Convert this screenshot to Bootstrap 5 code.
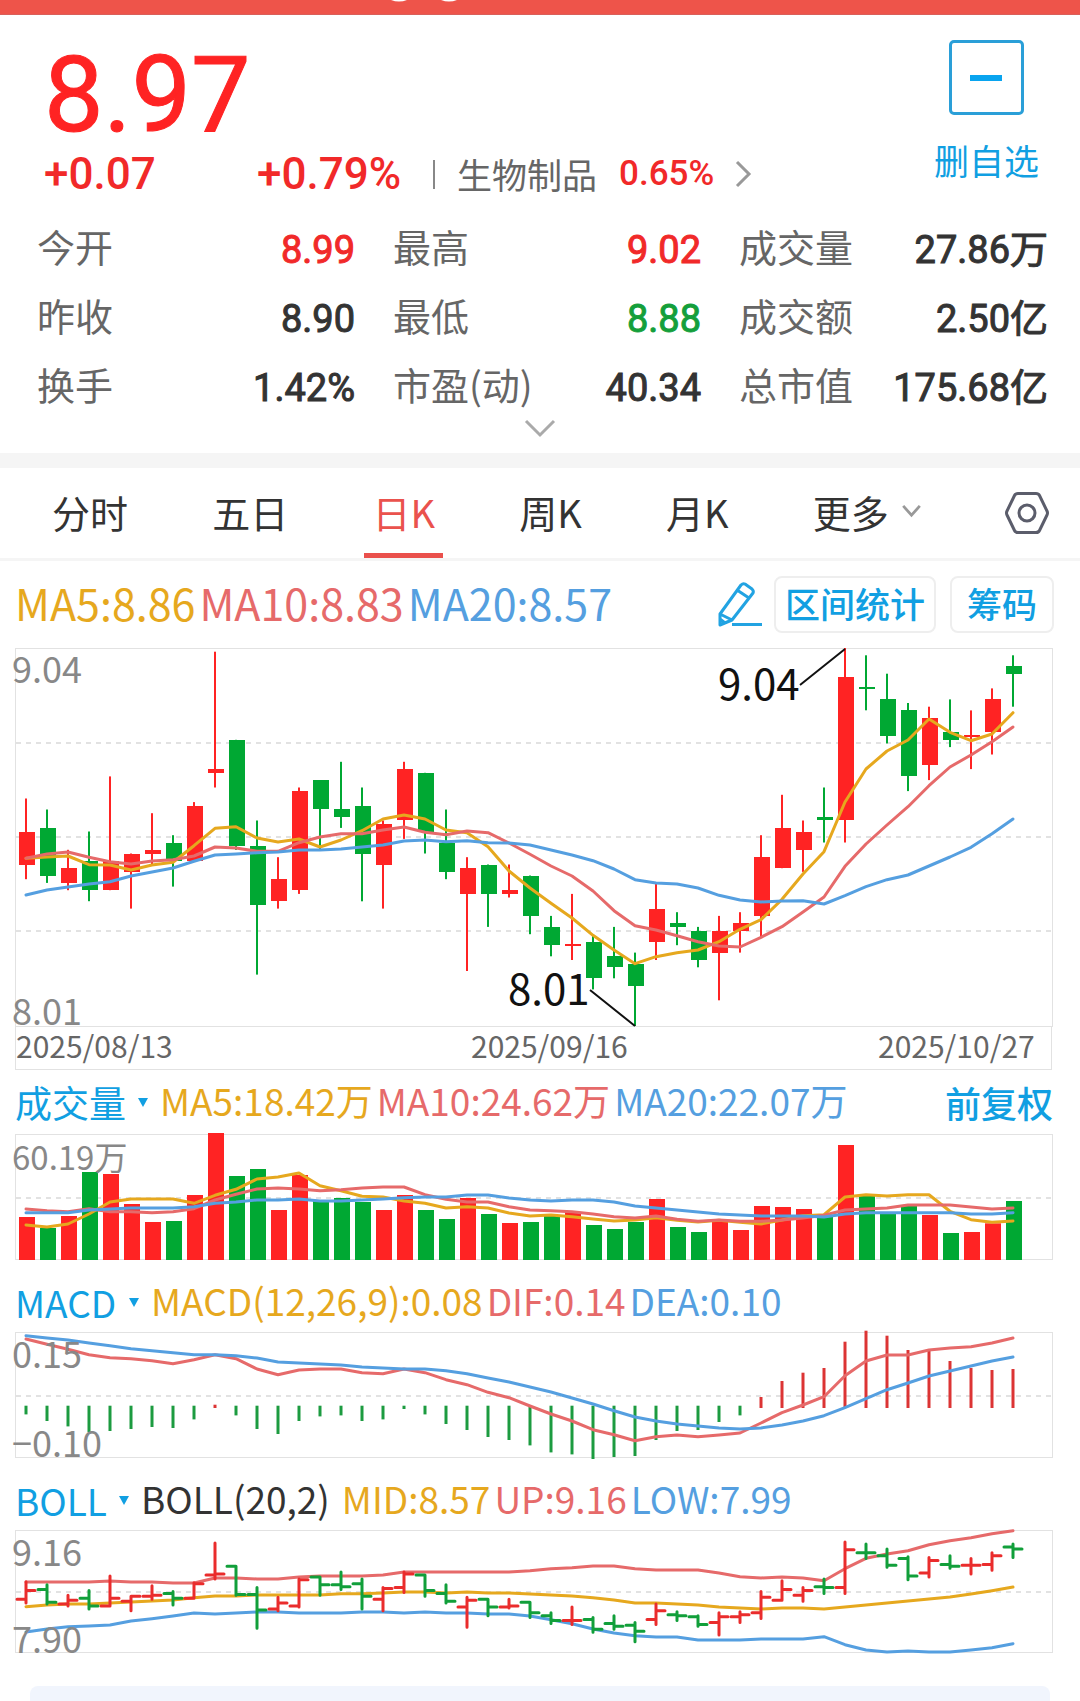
<!DOCTYPE html>
<html lang="zh-CN">
<head>
<meta charset="utf-8">
<meta name="viewport" content="width=device-width, initial-scale=1">
<title>日K 行情</title>
<link href="https://cdn.jsdelivr.net/npm/bootstrap@5.3.0/dist/css/bootstrap.min.css" rel="stylesheet">
<style>
  :root {
    --up: #ff2323; --down: #00a833; --accent: #119fe2;
    --c5: #e6a81e; --c10: #e66a6a; --c20: #559fe0;
  }
  body { font-family: "Noto Sans CJK SC", sans-serif; color: #333; background: #fff; overflow-x: hidden; }
  button, select { font-family: inherit; background: none; border: 0; padding: 0; }
  svg { display: block; overflow: visible; }
  .topstrip { height: 15px; background: #ee544a; border-bottom: 1px solid #d9605a; }
  .topstrip svg { width: 66px; height: 2px; margin-left: 391px; }
  .num { font-family: Roboto, "Noto Sans CJK SC", sans-serif; font-weight: 500; }
  .c-up { color: #f12929; } .c-down { color: #149f3b; } .c-label { color: #666; } .c-accent { color: var(--accent); }
  .c5 { color: var(--c5); } .c10 { color: var(--c10); } .c20 { color: var(--c20); }

  .summary { padding: 25px 41px 0 44px; }
  .price { font-size: 106px; line-height: 110px; font-weight: 400; color: var(--up); -webkit-text-stroke: 1px var(--up); }
  .changes { height: 48px; font-size: 44px; line-height: 48px; }
  .change-abs { width: 213px; }
  .sector { font-size: 35px; line-height: 48px; color: #666; text-decoration: none; margin-left: 32px; gap: 22px; }
  .sector .num { font-size: 35px; }
  .sector-bar { width: 2px; height: 29px; background: #888; }
  .watch { font-size: 35px; line-height: 40px; color: var(--accent); }
  .watch-box { width: 75px; height: 75px; border: 3px solid #2a9fd8; border-radius: 5px; margin-bottom: 25px; }
  .watch-box span { width: 32px; height: 6px; background: #09a4ef; }

  .facts { display: grid; grid-template-columns: 318fr 308fr 309fr; grid-auto-rows: 69px; column-gap: 38px; margin: 15px 32px 0 37px; font-size: 38px; }
  .facts dt { font-weight: 400; color: #666; line-height: 66px; }
  .facts dd { margin: 0; font-weight: 400; line-height: 74px; -webkit-text-stroke: 1px currentColor; }
  .expand { height: 33px; }

  .periods { height: 108px; border-top: 15px solid #f5f5f5; border-bottom: 3px solid #f5f5f5; padding: 0 31px 0 52px; }
  .periods button { font-size: 38px; height: 90px; color: #333; position: relative; padding-bottom: 4px; }
  .periods .icon-only { padding-bottom: 0; }
  .periods button.active { color: #ea524d; }
  .periods button.active::after { content: ""; position: absolute; left: -8px; right: -8px; bottom: 0; height: 5px; background: #ea504c; }
  .periods .more { gap: 13px; }

  .ma-row { height: 87px; padding: 0 26px 0 15px; font-size: 43px; }
  .ma-row span, .ind-row span { white-space: nowrap; }
  .ma-row .values { gap: 4px; padding-bottom: 4px; }
  .tool { height: 57px; border: 2px solid #eee !important; border-radius: 8px; color: var(--accent); font-size: 35px; font-weight: 500; line-height: 35px; padding-bottom: 4px !important; }
  .tool-wide { padding: 0 9px; margin: 0 14px 0 12px; }
  .tool-slim { padding: 0 15px; }

  .ind-row { height: 64px; padding: 0 27px 0 15px; font-size: 37px; line-height: 48px; }
  .ind-tall { height: 72px; padding-top: 12px; }
  .ind-row select { appearance: none; color: var(--accent); }
  .ind-row .pick { gap: 12px; margin-right: 12px; }
  .ind-row .values { gap: 4px; padding-bottom: 4px; }
  .ind-row .adjust { color: var(--accent); font-size: 36px; font-weight: 500; }
  .plot { padding: 0 27px 0 15px; }
  .plot svg { width: 100%; height: auto; }
  .plot text { font-size: 36px; fill: #888; }
  .plot .sub { font-size: 33px; }
  .plot .date { font-size: 30px; fill: #666; }
  .plot .peak { font-size: 42px; fill: #111; }
  .frame { fill: none; stroke: #e2e2e2; stroke-width: 1; }
  .dash { stroke: #e2e2e2; stroke-width: 2; stroke-dasharray: 5 5; }
  .ln { fill: none; stroke-width: 3; stroke-linejoin: round; stroke-linecap: round; }
  .nextcard { height: 15px; margin: 33px 30px 0; background: #f1f5fd; border-radius: 8px 8px 0 0; }
</style>
<script src="https://cdn.jsdelivr.net/npm/bootstrap@5.3.0/dist/js/bootstrap.bundle.min.js"></script>
</head>
<body>
<header class="topstrip"><svg viewBox="0 0 66 2" aria-hidden="true"><path d="M0 0h16q-8 3-16 0zM50 0h16q-8 3-16 0z" fill="#fff"/></svg></header>

<section class="summary d-flex justify-content-between">
  <div>
    <div class="price num">8.97</div>
    <div class="changes d-flex align-items-center">
      <span class="num c-up change-abs">+0.07</span>
      <span class="num c-up">+0.79%</span>
      <a href="#" class="sector d-flex align-items-center">
        <span class="sector-bar"></span><span>生物制品</span>
        <span class="num c-up">0.65%</span>
        <svg width="15" height="26" viewBox="0 0 15 26" fill="none" stroke="#999" stroke-width="3"><path d="M1 1l12 12L1 25"/></svg>
      </a>
    </div>
  </div>
  <button class="watch d-flex flex-column align-items-center" type="button">
    <span class="watch-box d-flex align-items-center justify-content-center"><span></span></span>
    删自选
  </button>
</section>

<dl class="facts mb-0">
  <div class="d-flex justify-content-between"><dt>今开</dt><dd class="num c-up">8.99</dd></div>
  <div class="d-flex justify-content-between"><dt>最高</dt><dd class="num c-up">9.02</dd></div>
  <div class="d-flex justify-content-between"><dt>成交量</dt><dd class="num">27.86万</dd></div>
  <div class="d-flex justify-content-between"><dt>昨收</dt><dd class="num">8.90</dd></div>
  <div class="d-flex justify-content-between"><dt>最低</dt><dd class="num c-down">8.88</dd></div>
  <div class="d-flex justify-content-between"><dt>成交额</dt><dd class="num">2.50亿</dd></div>
  <div class="d-flex justify-content-between"><dt>换手</dt><dd class="num">1.42%</dd></div>
  <div class="d-flex justify-content-between"><dt>市盈(动)</dt><dd class="num">40.34</dd></div>
  <div class="d-flex justify-content-between"><dt>总市值</dt><dd class="num">175.68亿</dd></div>
</dl>
<button class="expand d-flex w-100 justify-content-center" type="button" aria-label="展开">
  <svg width="30" height="17" viewBox="0 0 30 17" fill="none" stroke="#aaa" stroke-width="3"><path d="M1 1l14 14L29 1"/></svg>
</button>

<nav class="periods d-flex justify-content-between align-items-center">
  <button type="button">分时</button>
  <button type="button">五日</button>
  <button type="button" class="active">日K</button>
  <button type="button">周K</button>
  <button type="button">月K</button>
  <button type="button" class="more d-flex align-items-center">更多
    <svg width="19" height="12" viewBox="0 0 20 13" fill="none" stroke="#999" stroke-width="3"><path d="M1 1l9 10 9-10"/></svg></button>
  <button type="button" class="icon-only" aria-label="设置">
    <svg width="44" height="42" viewBox="0 0 44 42" fill="none" stroke="#5b5d6b" stroke-width="3"><path d="M13 1.500h18q2.500 0 3.500 2l7.500 15.500q1 2 0 4l-7.500 15.500q-1 2-3.500 2H13q-2.500 0-3.500-2L2 23q-1-2 0-4L9.500 3.500q1-2 3.500-2z"/><circle cx="22" cy="21" r="8"/></svg></button>
</nav>

<section class="ma-row d-flex justify-content-between align-items-center">
  <div class="values d-flex"><span class="c5">MA5:8.86</span><span class="c10">MA10:8.83</span><span class="c20">MA20:8.57</span></div>
  <div class="d-flex align-items-center">
    <button type="button" aria-label="画线">
      <svg width="44" height="45" viewBox="0 0 44 45" fill="none" stroke="#22a3e2" stroke-width="3" stroke-linejoin="round"><path d="M2 43V32L23 3q2-2 4-1l7 5q2 2 1 4L14 38zM2 32l12 6M19 8l12 8M2 37l5 4M14 42.500h30"/></svg></button>
    <button type="button" class="tool tool-wide">区间统计</button>
    <button type="button" class="tool tool-slim">筹码</button>
  </div>
</section>
<div class="plot"><svg id="kline" viewBox="15 8 1038 422" role="img" aria-label="日K线"></svg></div>

<section class="ind-row d-flex align-items-center">
  <label class="pick d-flex align-items-center"><select aria-label="副图一"><option>成交量</option></select>
    <svg width="10" height="9" viewBox="0 0 10 9" fill="#119fe2"><path d="M0 0h10L5 9z"/></svg></label>
  <div class="values d-flex"><span class="c5">MA5:18.42万</span><span class="c10">MA10:24.62万</span><span class="c20">MA20:22.07万</span></div>
  <button type="button" class="adjust ms-auto">前复权</button>
</section>
<div class="plot"><svg id="vol" viewBox="15 54 1038 126" role="img" aria-label="成交量"></svg></div>

<section class="ind-row ind-tall d-flex align-items-center">
  <label class="pick d-flex align-items-center"><select aria-label="副图二"><option>MACD</option></select>
    <svg width="10" height="9" viewBox="0 0 10 9" fill="#119fe2"><path d="M0 0h10L5 9z"/></svg></label>
  <div class="values d-flex"><span class="c5">MACD(12,26,9):0.08</span><span class="c10">DIF:0.14</span><span class="c20">DEA:0.10</span></div>
</section>
<div class="plot"><svg id="macd" viewBox="15 12 1038 126" role="img" aria-label="MACD"></svg></div>

<section class="ind-row ind-tall d-flex align-items-center">
  <label class="pick d-flex align-items-center"><select aria-label="副图三"><option>BOLL</option></select>
    <svg width="10" height="9" viewBox="0 0 10 9" fill="#119fe2"><path d="M0 0h10L5 9z"/></svg></label>
  <div class="values d-flex"><span class="me-2">BOLL(20,2)</span><span class="c5">MID:8.57</span><span class="c10">UP:9.16</span><span class="c20">LOW:7.99</span></div>
</section>
<div class="plot"><svg id="boll" viewBox="15 210 1038 123" role="img" aria-label="BOLL"></svg></div>
<div class="nextcard"></div>

<script>
const UP = '#ff2323', DOWN = '#00a833', C5 = '#e6a81e', C10 = '#e66a6a', C20 = '#559fe0';
const X = i => 26 + 21 * i;

// open, high, low, close in cents; a trailing 1 marks an unchanged bar drawn as rising
const K = [[845,863,841,854],[855,860,840,842],[840,849,838,844],[846,854,835,838],[838,869,838,846],[843,848,833,848],
[848,859,845,849],[851,853,839,846],[846,862,846,861],[870,903,866,871],[879,879,849,850],[850,857,815,834],
[835,847,833,841],[838,866,837,865],[868,868,849,860],[860,873,855,858],[861,866,835,848],[845,857,833,856],
[857,873,852,871],[870,870,848,854],[851,860,841,843],[837,847,816,844],[845,845,828,837],[837,845,836,838],
[842,842,826,831],[828,831,820,823],[823,837,819,823,1],[824,826,811,814],[820,828,814,817],[818,821,801,812],
[824,840,819,833],[829,832,823,828],[827,828,817,819],[821,831,808,827],[827,832,821,829],[831,853,825,847],
[844,864,844,855],[849,857,843,854],[858,866,851,857],[857,904,851,896],[893,902,887,893],[890,897,878,880],
[887,889,865,869],[872,888,868,885],[881,890,877,879],[880,887,871,880,1],[881,893,875,890],[899,902,888,897]];
const isUp = k => k[3] > k[0] || k[4] === 1;

// chart lines and bar ends, three units to a pixel
const S = {
 ma5:[655,651,648,674,675,690,675,667,617,565,560,594,606,597,621,600,572,537,525,537,570,578,620,693,744,790,834,886,930,971,950,938,930,905,868,839,778,702,635,486,387,333,300,237,277,302,282,218],
 ma10:[655,642,636,652,665,672,663,659,648,621,624,634,634,608,591,581,581,570,561,577,584,573,578,609,643,678,708,753,812,857,870,887,905,918,921,892,860,816,771,679,612,555,500,437,381,345,305,261],
 ma20:[765,750,741,732,725,708,696,684,664,645,642,638,636,630,630,627,621,615,603,600,605,602,608,609,615,630,645,662,687,719,729,732,744,766,780,786,783,782,792,767,740,719,705,678,651,622,581,537],
 vol:[411,444,408,276,282,372,426,423,345,159,288,267,390,285,360,354,366,390,345,390,417,354,402,429,426,405,396,435,447,426,357,441,456,426,450,378,381,387,410,195,348,402,378,405,459,456,430,363],
 v5:[435,441,432,402,366,357,357,357,370,346,328,297,291,279,317,332,349,351,363,370,384,380,384,399,408,405,410,417,423,420,413,421,426,421,427,432,420,407,404,351,344,348,344,344,394,419,427,423],
 v10:[387,392,395,386,395,395,398,395,386,360,343,327,324,327,332,329,324,321,321,344,358,366,366,380,390,392,395,402,410,414,408,418,424,420,424,424,420,414,406,390,387,384,375,375,375,381,387,384],
 v20:[398,398,398,390,387,384,384,384,380,370,366,360,360,357,363,363,360,357,353,351,351,345,345,354,360,363,360,360,366,378,384,390,396,402,405,408,408,408,411,402,398,398,398,398,398,402,402,398],
 hist:[283,303,319,336,333,327,321,324,298,254,286,327,342,303,289,286,303,298,267,283,312,330,351,360,376,397,403,417,411,408,360,333,330,306,286,231,183,158,144,65,32,47,90,92,123,144,150,147],
 dif:[57,73,88,104,113,116,122,131,119,104,116,147,164,150,147,147,158,161,147,158,179,194,217,233,258,282,303,329,344,362,350,345,350,345,339,309,278,255,230,167,123,105,105,90,84,80,69,54],
 dea:[47,54,60,69,77,86,92,98,104,104,107,114,126,129,132,135,141,144,147,147,152,161,174,186,201,216,234,252,272,291,303,312,318,324,327,324,315,303,287,263,236,209,189,168,153,138,123,111],
 up:[786,786,786,786,783,786,786,789,789,774,774,777,777,771,768,768,768,765,756,756,756,756,756,756,752,746,743,738,738,746,750,750,750,759,770,774,771,774,782,746,715,702,692,674,662,653,641,632],
 mid:[860,855,852,852,849,846,843,840,833,828,828,825,825,825,825,821,821,819,816,816,819,816,819,819,822,825,828,833,840,849,849,852,855,861,864,867,864,864,867,861,855,849,843,837,831,822,812,801],
 low:[936,927,920,918,915,903,896,888,879,882,879,876,876,879,879,879,876,876,879,876,879,879,882,882,888,899,911,927,939,947,951,951,960,960,960,957,957,957,950,974,990,996,993,996,996,990,983,971]
};
const line = (a, c) => `<polyline class="ln" stroke="${c}" points="${a.map((v, i) => X(i) + ',' + (v / 3).toFixed(1)).join(' ')}"/>`;
const rect = (x, y, w, h, c) => `<rect x="${x}" y="${y.toFixed(1)}" width="${w}" height="${h.toFixed(1)}" fill="${c}"/>`;
const dash = y => `<line class="dash" x1="16" x2="1052" y1="${y}" y2="${y}"/>`;
const frame = (y, h, w = 1037) => `<rect class="frame" x="15.5" y="${y}" width="${w}" height="${h}"/>`;
const text = (x, y, t, c) => `<text x="${x}" y="${y}" class="${c || ''}">${t}</text>`;
const put = (id, s) => { document.getElementById(id).innerHTML = s; };

const py = p => 8 + (904 - p) * 3.670;
put('kline', frame(8.5, 378) + frame(386.5, 43, 1036) + dash(103) + dash(197) + dash(291) +
  K.map((k, i) => {
    const c = isUp(k) ? UP : DOWN, t = Math.round(py(Math.max(k[0], k[3]))), b = Math.round(py(Math.min(k[0], k[3])));
    return rect(X(i) - 1, py(k[1]), 2, py(k[2]) - py(k[1]), c) +
           rect(X(i) - 7, b - t < 2 ? t - 1 : t, 16, Math.max(2, b - t), c);
  }).join('') + line(S.ma5, C5) + line(S.ma10, C10) + line(S.ma20, C20) +
  '<path d="M800 45L845 9M590 350L635 386" stroke="#111" stroke-width="2" fill="none"/>' +
  text(12, 43, '9.04') + text(12, 385, '8.01') + text(718, 60, '9.04', 'peak') + text(508, 365, '8.01', 'peak') +
  text(16, 418, '2025/08/13', 'date') + text(471, 418, '2025/09/16', 'date') + text(878, 418, '2025/10/27', 'date'));

put('vol', frame(54.5, 125) + dash(118) +
  S.vol.map((v, i) => rect(X(i) - 7, v / 3, 16, 180 - v / 3, isUp(K[i]) ? UP : DOWN)).join('') +
  line(S.v5, C5) + line(S.v10, C10) + line(S.v20, C20) + text(12, 90, '60.19万', 'sub'));

put('macd', frame(12.5, 125) + dash(76) +
  S.hist.map((v, i) => {
    const pos = v < 257, a = pos ? v : 257, b = pos ? 264 : v;
    return rect(X(i) - 1.5, a / 3, 3, (b - a) / 3, pos ? '#dc3434' : '#1c9b40');
  }).join('') + line(S.dif, C10) + line(S.dea, C20) + text(12, 48, '0.15', '') + text(12, 137, '−0.10', ''));

const by = p => 210.5 + (916 - p) * .968;
put('boll', frame(210.5, 122) + dash(272) + line(S.up, C10) + line(S.mid, C5) + line(S.low, C20) +
  K.map((k, i) => `<path d="M${X(i)} ${by(k[1])}V${by(k[2])}M${X(i) - 9} ${by(k[0])}H${X(i)}M${X(i)} ${by(k[3])}h9" stroke="${isUp(k) ? '#ea2c2c' : '#119f3a'}" stroke-width="3" stroke-linecap="round" fill="none"/>`).join('') +
  text(12, 246, '9.16', '') + text(12, 333, '7.90', ''));
</script>
</body>
</html>
